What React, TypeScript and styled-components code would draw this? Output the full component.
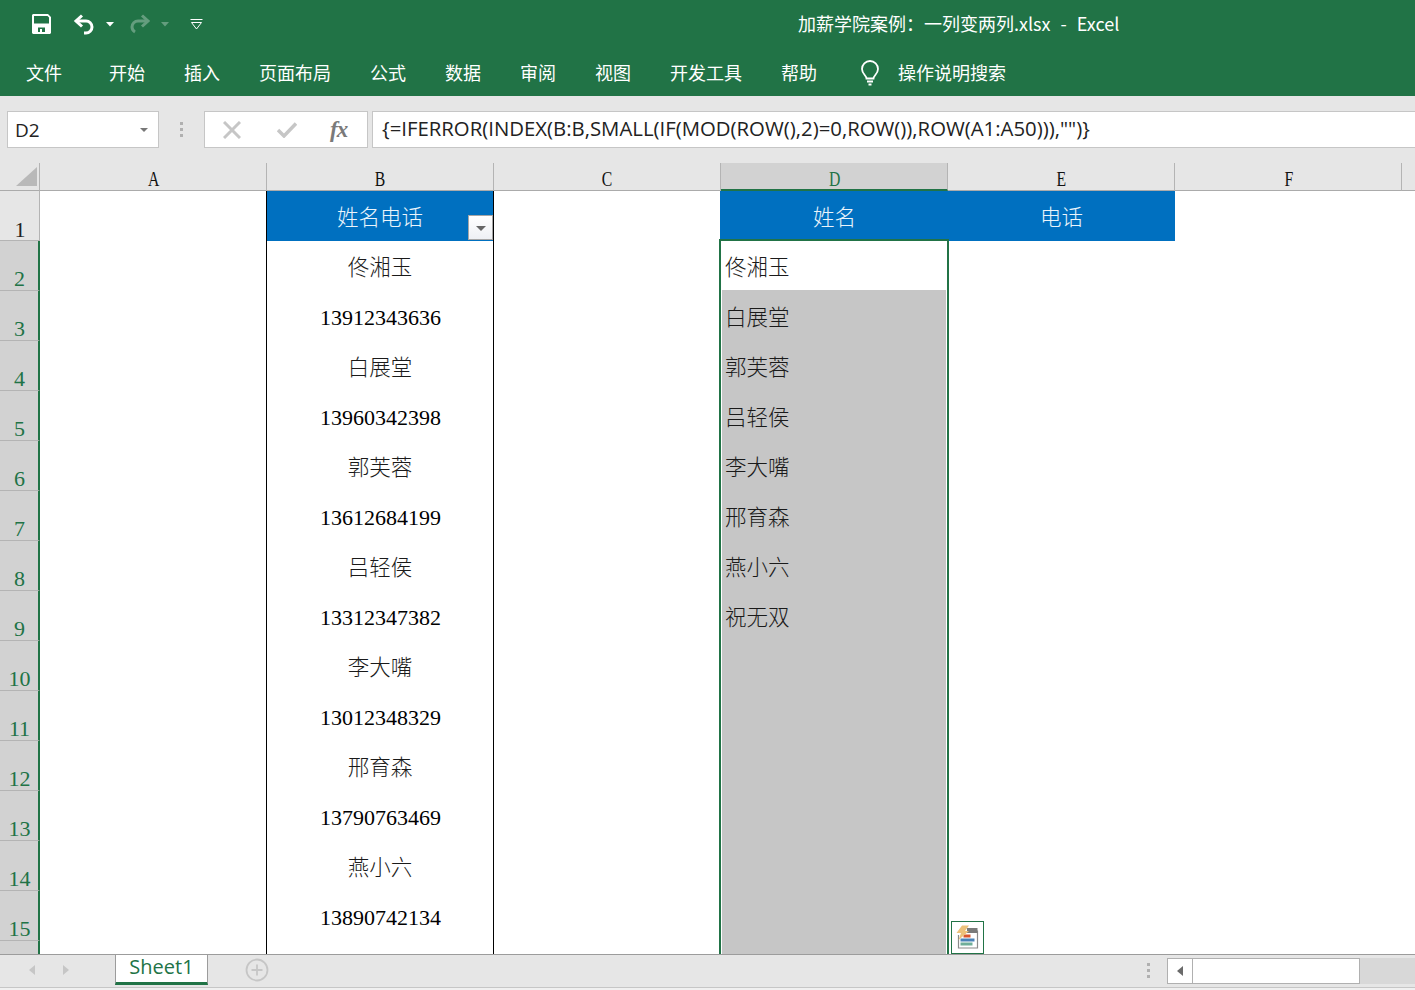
import React from "react";
import styled, { createGlobalStyle } from "styled-components";

const Global = createGlobalStyle`
  html, body { margin: 0; padding: 0; background: #fff; }
  * { box-sizing: border-box; }
`;

const green = "#217346";
const uiFont = `"Noto Sans CJK SC", "Noto Sans", sans-serif`;
const cellFont = `"Liberation Serif", "Noto Sans CJK SC", serif`;

const Page = styled.div`
  width: 1415px;
  height: 990px;
  display: flex;
  flex-flow: column;
  overflow: hidden;
  font-family: ${uiFont};
`;

const TitleBar = styled.header`
  height: 48px;
  flex: none;
  display: flex;
  align-items: center;
  padding-left: 32px;
  background: ${green};
  color: #fff;
`;

const QuickIcon = styled.svg<{ $left?: number; $dim?: boolean }>`
  flex: none;
  display: block;
  margin-left: ${(p) => p.$left ?? 0}px;
  opacity: ${(p) => (p.$dim ? 0.3 : 1)};
`;

const Title = styled.div`
  margin: 0 0 3px 595px;
  font-size: 18px;
  line-height: 24px;
  white-space: pre;
  word-spacing: 1px;
`;

const Tabs = styled.nav`
  height: 48px;
  flex: none;
  display: flex;
  align-items: center;
  gap: 39px;
  padding-left: 26px;
  background: ${green};
  color: #fff;
  font-size: 18px;
  line-height: 24px;
  span:first-child {
    margin-right: 8px;
  }
`;

const Search = styled.div`
  display: flex;
  align-items: center;
  gap: 18px;
  margin-left: 4px;
  svg {
    margin-top: 2px;
  }
`;

const FormulaBar = styled.section`
  height: 67px;
  flex: none;
  display: flex;
  padding: 15px 0;
  background: #e6e6e6;
`;

const Field = styled.div`
  height: 37px;
  flex: none;
  display: flex;
  align-items: center;
  background: #fff;
  border: 1px solid #c6c6c6;
`;

const NameBox = styled(Field)`
  width: 152px;
  margin-left: 7px;
  padding: 0 10px 0 7px;
  justify-content: space-between;
  font-family: "Open Sans", sans-serif;
  font-size: 19px;
  color: #222;
`;

const Caret = styled.i`
  width: 0;
  height: 0;
  border-style: solid;
  border-width: 4px 4px 0;
  border-color: #777 transparent transparent;
`;

const Dots = styled.div`
  width: 45px;
  flex: none;
  display: flex;
  flex-flow: column;
  align-items: center;
  justify-content: center;
  gap: 3px;
  i {
    width: 3px;
    height: 3px;
    background: #b0b0b0;
  }
`;

const FnBox = styled(Field)`
  width: 164px;
  padding-left: 18px;
`;

const CheckMark = styled.svg`
  margin-left: 36px;
`;

const Fx = styled.span`
  margin-left: 33px;
  font-family: "Liberation Serif", serif;
  font-style: italic;
  font-weight: 700;
  font-size: 23px;
  letter-spacing: -1px;
  color: #7a7a7a;
`;

const Formula = styled(Field)`
  margin-left: 4px;
  flex: 1;
  min-width: 0;
  border-right: 0;
  padding: 0 0 4px 9px;
  font-family: "Open Sans", sans-serif;
  font-size: 20.35px;
  color: #222;
  white-space: pre;
`;

const columns = "40px repeat(6, 227px) 1fr";

const ColumnHead = styled.div`
  height: 28px;
  flex: none;
  display: grid;
  grid-template-columns: ${columns};
  background: #e6e6e6;
`;

const Corner = styled.div`
  position: relative;
  border-right: 1px solid #b4b4b4;
  border-bottom: 1px solid #ababab;
  svg {
    display: block;
    margin: 4px 0 0 16px;
  }
`;

const ColumnLabel = styled.div<{ $active?: boolean; $last?: boolean }>`
  display: flex;
  align-items: flex-end;
  justify-content: center;
  padding-left: 1px;
  border-right: ${(p) => (p.$last ? "0" : "1px solid #b4b4b4")};
  border-bottom: ${(p) => (p.$active ? `2px solid ${green}` : "1px solid #ababab")};
  background: ${(p) => (p.$active ? "#d2d2d2" : "transparent")};
  color: ${(p) => (p.$active ? green : "#111")};
  font-family: "Liberation Serif", serif;
  font-size: 21px;
  line-height: ${(p) => (p.$active ? "20px" : "21px")};
  span {
    display: inline-block;
    transform: scaleX(0.75);
  }
`;

const Sheet = styled.main`
  position: relative;
  height: 763px;
  flex: none;
  overflow: hidden;
`;

const Row = styled.div`
  display: grid;
  grid-template-columns: ${columns};
  height: 50px;
`;

const RowLabel = styled.div<{ $active?: boolean }>`
  display: flex;
  align-items: flex-end;
  justify-content: center;
  padding-left: 1px;
  border-bottom: 1px solid #b4b4b4;
  border-right: ${(p) => (p.$active ? `2px solid ${green}` : "1px solid #b4b4b4")};
  background: ${(p) => (p.$active ? "#d2d2d2" : "#e6e6e6")};
  color: ${(p) => (p.$active ? green : "#222")};
  font-family: "Liberation Serif", serif;
  font-size: 22px;
  line-height: ${(p) => (p.$active ? "23px" : "21px")};
`;

const Cell = styled.div<{ $head?: boolean; $framed?: boolean; $picked?: boolean; $left?: boolean; $num?: boolean }>`
  position: relative;
  display: flex;
  align-items: center;
  justify-content: ${(p) => (p.$left ? "flex-start" : "center")};
  padding: ${(p) => (p.$num ? "4px 0 0 1px" : p.$left ? "0 0 2px 4px" : "0 0 2px")};
  background: ${(p) => (p.$head ? "#0070c0" : p.$picked ? "#c6c6c6" : "#fff")};
  color: ${(p) => (p.$head ? "#eaf4fb" : p.$num ? "#000" : "#1a1a1a")};
  font-family: ${cellFont};
  font-size: ${(p) => (p.$num ? "22px" : "21.5px")};
  font-weight: ${(p) => (p.$num ? 400 : 300)};
  border-right: ${(p) => (p.$framed ? "1px solid #000" : "0")};
  box-shadow: ${(p) =>
    p.$framed ? "-1px 0 0 #000" : p.$head ? "-1px 0 0 #0070c0" : p.$picked ? "0 -1px 0 #c6c6c6" : "none"};
`;

const FilterButton = styled.div`
  position: absolute;
  right: 0;
  bottom: 1px;
  width: 25px;
  height: 25px;
  display: flex;
  align-items: center;
  justify-content: center;
  background: linear-gradient(#fff, #eef0f4);
  border: 1px solid #a6a6a6;
  ${Caret} {
    border-width: 5px 5px 0;
    border-color: #666 transparent transparent;
    margin-top: 2px;
  }
`;

const Selection = styled.div`
  position: absolute;
  left: 719px;
  top: 48px;
  width: 230px;
  height: 800px;
  border: 2px solid ${green};
  box-shadow: inset 0 0 0 1px #fff;
  pointer-events: none;
`;

const PasteOptions = styled.div`
  position: absolute;
  left: 951px;
  top: 730px;
  width: 33px;
  height: 33px;
  display: flex;
  align-items: center;
  justify-content: center;
  background: #fff;
  border: 1px solid ${green};
`;

const TabStrip = styled.footer`
  height: 33px;
  flex: none;
  display: flex;
  align-items: flex-start;
  background: #e6e6e6;
  border-top: 1px solid #9c9c9c;
`;

const NavArrows = styled.div`
  width: 115px;
  flex: none;
  height: 30px;
  display: flex;
  align-items: center;
  gap: 28px;
  padding-left: 29px;
`;

const Arrow = styled.i<{ $right?: boolean }>`
  width: 0;
  height: 0;
  border-style: solid;
  border-width: 5.500px 0 5.500px 6px;
  border-color: transparent transparent transparent #c6c6c6;
  transform: ${(p) => (p.$right ? "none" : "scaleX(-1)")};
`;

const SheetTab = styled.div`
  width: 93px;
  height: 30px;
  flex: none;
  display: flex;
  justify-content: center;
  align-items: center;
  padding-bottom: 3px;
  background: #fff;
  border: 1px solid #9c9c9c;
  border-width: 0 1px;
  border-bottom: 3px solid ${green};
  color: ${green};
  font-family: "Open Sans", sans-serif;
  font-size: 20px;
  line-height: 24px;
`;

const AddSheet = styled.svg`
  flex: none;
  display: block;
  margin: 3px 0 0 37px;
`;

const StripDots = styled(Dots)`
  width: 10px;
  height: 30px;
  margin-left: 874px;
  flex: none;
`;

const ScrollBar = styled.div`
  margin: 3px 0 0 14px;
  height: 26px;
  flex: 1;
  display: flex;
  background: #d8d8d8;
`;

const ScrollButton = styled.div`
  width: 26px;
  flex: none;
  display: flex;
  align-items: center;
  justify-content: center;
  background: #fff;
  border: 1px solid #b0b0b0;
  ${Arrow} {
    border-left-color: #6a6a6a;
  }
`;

const ScrollThumb = styled.div`
  width: 168px;
  flex: none;
  margin-left: -1px;
  background: #fff;
  border: 1px solid #b0b0b0;
`;

const StatusEdge = styled.div`
  flex: 1;
  background: #f0f0f0;
  border-top: 1px solid #c6c6c6;
`;

const columnNames = ["A", "B", "C", "D", "E", "F", ""];
const tabNames = ["文件", "开始", "插入", "页面布局", "公式", "数据", "审阅", "视图", "开发工具", "帮助"];
const listB = [
  "佟湘玉", "13912343636", "白展堂", "13960342398", "郭芙蓉", "13612684199", "吕轻侯",
  "13312347382", "李大嘴", "13012348329", "邢育森", "13790763469", "燕小六", "13890742134", "",
];
const listD = ["佟湘玉", "白展堂", "郭芙蓉", "吕轻侯", "李大嘴", "邢育森", "燕小六", "祝无双"];

function App() {
  return (
    <Page>
      <Global />
      <TitleBar>
        <QuickIcon width="19" height="20" viewBox="0 0 19 20" fill="#fff">
          <path
            fillRule="evenodd"
            d="M1 0h15l3 3v16l-1 1H1l-1-1V1zM2 2v7.500h15V3.500L15.500 2zM6 13.500V18h2v-3h2v3h3v-4.500z"
          />
        </QuickIcon>
        <QuickIcon $left={22} width="22" height="22" viewBox="0 0 22 22" fill="none" stroke="#fff" strokeWidth="3">
          <path d="M9 2.500 3 8l6 5.500" />
          <path d="M3.500 8H13a6 6 0 0 1 6 6 6 6 0 0 1-6 6h-2" />
        </QuickIcon>
        <QuickIcon $left={11} width="8" height="5" viewBox="0 0 8 5" fill="#fff">
          <path d="M0 0h8L4 4.500z" />
        </QuickIcon>
        <QuickIcon $dim $left={15} width="22" height="22" viewBox="0 0 22 22" fill="none" stroke="#fff" strokeWidth="3">
          <path d="M13 2.500 19 8l-6 5.500" />
          <path d="M18.500 8H9a6 6 0 0 0-6 6 6 6 0 0 0 3 5" />
        </QuickIcon>
        <QuickIcon $dim $left={10} width="8" height="5" viewBox="0 0 8 5" fill="#fff">
          <path d="M0 0h8L4 4.500z" />
        </QuickIcon>
        <QuickIcon $left={21} width="13" height="11" viewBox="0 0 13 11" fill="none" stroke="#fff" strokeWidth="1">
          <path d="M0.500 0.500h12M1.500 3.500h10L6.500 10z" />
        </QuickIcon>
        <Title>加薪学院案例：一列变两列.xlsx  -  Excel</Title>
      </TitleBar>

      <Tabs>
        {tabNames.map((name) => (
          <span key={name}>{name}</span>
        ))}
        <Search>
          <svg width="20" height="26" viewBox="0 0 20 26" fill="none" stroke="#fff" strokeWidth="1.800">
            <path d="M6.500 18.500c0-3-4.500-4.500-4.500-9.500a8 8 0 0 1 16 0c0 5-4.500 6.500-4.500 9.500z" />
            <path d="M7 21.500h6M8.500 24.500h3" />
          </svg>
          <span>操作说明搜索</span>
        </Search>
      </Tabs>

      <FormulaBar>
        <NameBox>
          D2
          <Caret />
        </NameBox>
        <Dots>
          <i />
          <i />
          <i />
        </Dots>
        <FnBox>
          <svg width="18" height="18" viewBox="0 0 18 18" fill="none" stroke="#c6c6c6" strokeWidth="3">
            <path d="M1 1l16 16M17 1 1 17" />
          </svg>
          <CheckMark width="20" height="16" viewBox="0 0 20 16" fill="none" stroke="#c6c6c6" strokeWidth="3.500">
            <path d="M1 8l6 6L19 1.500" />
          </CheckMark>
          <Fx>fx</Fx>
        </FnBox>
        <Formula>{'{=IFERROR(INDEX(B:B,SMALL(IF(MOD(ROW(),2)=0,ROW()),ROW(A1:A50))),"")}'}</Formula>
      </FormulaBar>

      <ColumnHead>
        <Corner>
          <svg width="21" height="19" viewBox="0 0 21 19" fill="#b9b9b9">
            <path d="M21 0v19H0z" />
          </svg>
        </Corner>
        {columnNames.map((name, i) => (
          <ColumnLabel key={i} $active={name === "D"} $last={name === ""}>
            <span>{name}</span>
          </ColumnLabel>
        ))}
      </ColumnHead>

      <Sheet>
        <Row>
          <RowLabel>1</RowLabel>
          <Cell />
          <Cell $head $framed>
            姓名电话
            <FilterButton>
              <Caret />
            </FilterButton>
          </Cell>
          <Cell />
          <Cell $head>姓名</Cell>
          <Cell $head>电话</Cell>
          <Cell />
          <Cell />
        </Row>
        {listB.map((value, i) => (
          <Row key={i}>
            <RowLabel $active>{i < 14 ? i + 2 : ""}</RowLabel>
            <Cell />
            <Cell $framed $num={/^\d+$/.test(value)}>
              {value}
            </Cell>
            <Cell />
            <Cell $left $picked={i > 0}>
              {listD[i]}
            </Cell>
            <Cell />
            <Cell />
            <Cell />
          </Row>
        ))}
        <Selection />
        <PasteOptions>
          <svg width="24" height="26" viewBox="0 0 24 26">
            <path d="M2.500 10v13h19V6H12" fill="#fff" stroke="#8a8a8a" strokeWidth="1.200" />
            <path d="M11 3h10.500v5H11z" fill="#7a7a7a" />
            <path d="M7.500 9.500h7v3h-7z" fill="#d9532c" />
            <path d="M4.500 13.500h14v3h-14z" fill="#4a82b8" />
            <path d="M4.500 17.500h12v3h-12z" fill="#6fae99" />
            <path d="M6 0.500h7L9 6h4L2.500 15 5 8H0.500z" fill="#edc17b" />
          </svg>
        </PasteOptions>
      </Sheet>

      <TabStrip>
        <NavArrows>
          <Arrow />
          <Arrow $right />
        </NavArrows>
        <SheetTab>Sheet1</SheetTab>
        <AddSheet width="24" height="24" viewBox="0 0 24 24" fill="none" stroke="#c6c6c6" strokeWidth="1.800">
          <circle cx="12" cy="12" r="10.500" />
          <path d="M12 6.500v11M6.500 12h11" />
        </AddSheet>
        <StripDots>
          <i />
          <i />
          <i />
        </StripDots>
        <ScrollBar>
          <ScrollButton>
            <Arrow />
          </ScrollButton>
          <ScrollThumb />
        </ScrollBar>
      </TabStrip>
      <StatusEdge />
    </Page>
  );
}

export default App;
